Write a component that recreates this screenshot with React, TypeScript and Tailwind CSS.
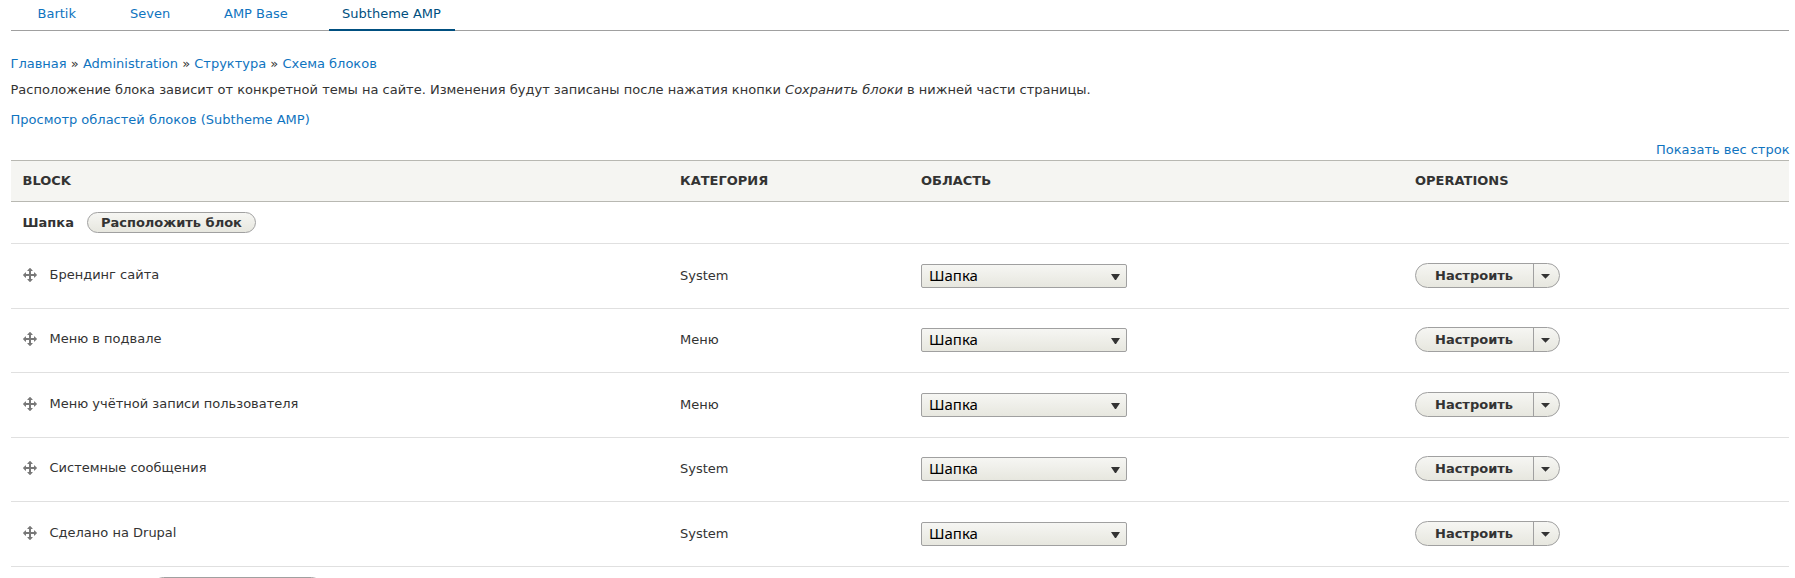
const rows = [
  { name: 'Брендинг сайта', category: 'System', height: 'h-[65px]' },
  { name: 'Меню в подвале', category: 'Меню', height: 'h-[64px] pb-px' },
  { name: 'Меню учётной записи пользователя', category: 'Меню', height: 'h-[65px]' },
  { name: 'Системные сообщения', category: 'System', height: 'h-[64px] pb-px' },
  { name: 'Сделано на Drupal', category: 'System', height: 'h-[65px]' },
];

const tabs = [
  { label: 'Bartik', box: 'w-[92.5px]' },
  { label: 'Seven', box: 'w-[94px]' },
  { label: 'AMP Base', box: 'w-[105px]' },
];

const columns = 'grid grid-cols-[657.5px_241px_494px_1fr] pl-3';
const face = 'border border-[#a0a0a0] bg-gradient-to-b from-[#f6f6f3] to-[#e7e7df]';

function MoveIcon() {
  return (
    <svg className="-ml-px mr-3 block h-4 w-4 shrink-0" viewBox="0 0 16 16" fill="#787878">
      <path d="M14.904 7.753l-2.373-2.372c-.291-.292-.529-.193-.529.22v1.399h-3v-3h1.398c.414 0 .512-.239.221-.53l-2.371-2.372c-.137-.136-.36-.136-.497 0l-2.372 2.372c-.292.292-.193.53.22.53h1.399v3h-3v-1.369c0-.413-.239-.511-.53-.22l-2.372 2.372c-.136.136-.136.359 0 .494l2.372 2.372c.291.292.53.192.53-.219v-1.43h3v3h-1.4c-.413 0-.511.238-.22.529l2.374 2.373c.137.137.36.137.495 0l2.373-2.373c.29-.291.19-.529-.222-.529h-1.398v-3h3v1.400c0 .412.238.511.529.219l2.373-2.371c.137-.137.137-.359 0-.495z" />
    </svg>
  );
}

function RegionSelect() {
  return (
    <button className={`flex h-6 w-[206px] items-center justify-between rounded-[2px] pl-[7px] pr-1.5 text-left text-[15px] text-black [font-family:'Noto_Sans',sans-serif] ${face}`}>
      <span className="mb-0.5">Шапка</span>
      <svg className="mt-0.5 h-1.5 w-[9px]" viewBox="0 0 9 6"><path d="M0 0h9L5 6H4z" fill="#333" /></svg>
    </button>
  );
}

function Operations() {
  return (
    <div className={`mb-px flex h-[25px] w-[145px] overflow-hidden rounded-full ${face}`}>
      <button className="w-[118px] border-r border-[#a0a0a0] pr-px font-bold leading-[22px]">Настроить</button>
      <button className="flex flex-1 items-center justify-center pr-0.5" aria-label="▾">
        <svg className="mt-px h-[5px] w-[9px]" viewBox="0 0 9 5"><path d="M0 0h9L4.500 4.700z" fill="#333" /></svg>
      </button>
    </div>
  );
}

export default function App() {
  return (
    <div className="h-[578px] overflow-hidden bg-white pl-[10.5px] pr-1.5 text-[13px] leading-5 text-[#333] [font-family:'DejaVu_Sans',sans-serif]">
      <nav className="flex h-[31px] border-b border-[#a0a0a0] pl-[27px] pt-1 text-[#0f74c0]">
        {tabs.map((t) => <a key={t.label} className={t.box}>{t.label}</a>)}
        <a className="h-[27px] w-[126px] shrink-0 border-b-2 border-[#004f80] pr-px text-center text-[#004f80]">Subtheme AMP</a>
      </nav>
      <div className="mt-[23px]">
        <a className="text-[#0f74c0]">Главная</a> » <a className="text-[#0f74c0]">Administration</a> » <a className="text-[#0f74c0]">Структура</a> » <a className="text-[#0f74c0]">Схема блоков</a>
      </div>
      <p className="mt-1.5">Расположение блока зависит от конкретной темы на сайте. Изменения будут записаны после нажатия кнопки <em>Сохранить блоки</em> в нижней части страницы.</p>
      <p className="mt-2.5 text-[#0f74c0]">Просмотр областей блоков (Subtheme AMP)</p>
      <p className="-mr-[0.5px] mt-2.5 text-right text-[#0f74c0]">Показать вес строк</p>
      <div className={`${columns} h-[42px] items-center border-y border-[#b8b8b2] bg-[#f5f5f2] font-bold`}>
        <div>BLOCK</div><div>КАТЕГОРИЯ</div><div>ОБЛАСТЬ</div><div>OPERATIONS</div>
      </div>
      <div className="flex h-[42px] items-center border-b border-[#e0e0e0] px-3 font-bold">
        Шапка
        <button className={`ml-[13px] h-[21px] w-[169px] rounded-full leading-[18px] ${face}`}>Расположить блок</button>
      </div>
      {rows.map((r) => (
        <div key={r.name} className={`${columns} ${r.height} items-center border-b border-[#e0e0e0]`}>
          <div className="mb-0.5 flex items-center"><MoveIcon />{r.name}</div>
          <div>{r.category}</div>
          <RegionSelect />
          <Operations />
        </div>
      ))}
      <div className="flex pt-2.5">
        <div className={`ml-[142.5px] h-[21px] w-[169px] rounded-full ${face}`} />
      </div>
    </div>
  );
}
